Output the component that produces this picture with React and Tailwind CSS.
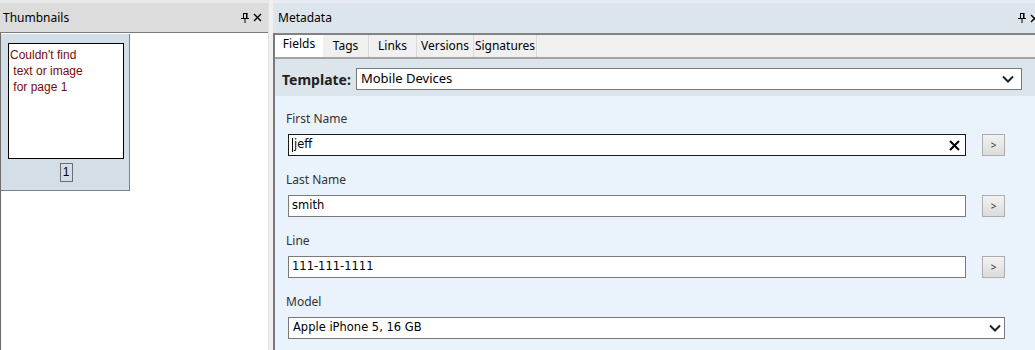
import React from 'react';

const ui = { fontFamily: '"Noto Sans", "Open Sans", sans-serif' };
const field = { fontFamily: '"DejaVu Sans", Verdana, sans-serif' };

function Pin() {
  return (
    <svg width="8" height="10" viewBox="0 0 8 10">
      <path d="M2 0.5h4.5 M2.5 0.5v5 M5.5 0.5v5 M0 5.5h8 M4 5.5v4.5" stroke="#000" strokeWidth="1" fill="none" />
      <rect x="5" y="0.5" width="1.5" height="5" fill="#000" />
    </svg>
  );
}

function Close() {
  return (
    <svg width="9" height="9" viewBox="0 0 9 9">
      <path d="M1 1L8 8M8 1L1 8" stroke="#000" strokeWidth="1.4" />
    </svg>
  );
}

function Chevron() {
  return (
    <svg width="12" height="8" viewBox="0 0 12 8">
      <path d="M1 1.5L6 6.5L11 1.5" stroke="#222" strokeWidth="2" fill="none" />
    </svg>
  );
}

function Field({ label, value, focused }) {
  return (
    <div className="mb-[16px]">
      <div className="pl-[11px] h-[16px] text-[12px] leading-[16px] text-[#333] mb-[7px]" style={ui}>{label}</div>
      <div className="flex items-center pl-[13px]">
        <div className={`relative w-[678px] h-[22px] bg-white border flex items-center pl-[3px] text-[11.5px] text-black ${focused ? 'border-[#1a1a1a]' : 'border-[#7a7a7a]'}`} style={field}>
          {focused && <span className="w-px h-[14px] bg-black mr-[1px]" />}
          {value}
          {focused && (
            <span className="absolute right-[5px] top-[5px]">
              <svg width="11" height="11" viewBox="0 0 11 11">
                <path d="M1 1L10 10M10 1L1 10" stroke="#000" strokeWidth="2" />
              </svg>
            </span>
          )}
        </div>
        <button className="ml-[16px] w-[23px] h-[22px] border border-[#adadad] bg-gradient-to-b from-[#f2f2f2] to-[#dcdcdc] text-[10px] text-[#333] leading-none flex items-center justify-center" style={ui}>
          &gt;
        </button>
      </div>
    </div>
  );
}

export default function App() {
  const tabs = [
    { name: 'Fields', w: 'w-[48px]' },
    { name: 'Tags', w: 'w-[46px]' },
    { name: 'Links', w: 'w-[48px]' },
    { name: 'Versions', w: 'w-[57px]' },
    { name: 'Signatures', w: 'w-[63px]' },
  ];

  return (
    <div className="w-[1035px] h-[350px] flex overflow-hidden bg-[#f0f0f0]" style={ui}>
      {/* Thumbnails panel */}
      <div className="w-[268px] shrink-0 flex flex-col">
        <div className="h-[33px] bg-[#dcdcdc] border-t-[3px] border-[#e9e9e9] border-b border-b-[#7a7a7a] flex items-center justify-between pl-[3px] pr-[6px]">
          <span className="text-[12px] text-black leading-none">Thumbnails</span>
          <div className="flex items-center gap-[4px]">
            <Pin />
            <Close />
          </div>
        </div>
        <div className="flex-1 bg-white border-l border-[#6d6d6d] pt-px">
          <div className="w-[129px] h-[157px] bg-[#d3dee6] border-r border-b border-[#7f7f7f] pt-[9px] pl-[7px]">
            <div className="w-[116px] h-[116px] bg-white border border-black pl-[1px] pt-[3px] text-[12px] leading-[16px] text-[#7a0a0a]" style={{ fontFamily: '"Liberation Sans", Arial, sans-serif' }}>
              <div>Couldn't find</div>
              <div>&nbsp;text or image</div>
              <div>&nbsp;for page 1</div>
            </div>
            <div className="flex justify-center w-[116px] mt-[4px]">
              <div className="w-[13px] h-[19px] border border-[#6d6d6d] text-[12px] leading-[17px] text-center text-black" style={{ fontFamily: '"Liberation Sans", Arial, sans-serif' }}>1</div>
            </div>
          </div>
        </div>
      </div>

      {/* splitter */}
      <div className="w-[5px] shrink-0 flex">
        <div className="w-px bg-[#e2e2e2]" />
      </div>

      {/* Metadata panel */}
      <div className="w-[772px] shrink-0 flex flex-col">
        <div className="h-[33px] bg-[#dde5ec] border-t-[3px] border-[#e6ecf1] flex items-center justify-between pl-[5px] pr-[6px]">
          <span className="text-[12px] text-black leading-none">Metadata</span>
          <div className="flex items-center gap-[4px]">
            <Pin />
            <Close />
          </div>
        </div>
        <div className="flex-1 flex flex-col border-l-2 border-[#7a7a7a]">
          {/* tab strip */}
          <div className="h-[26px] border-t-2 border-[#828282] border-b-2 border-b-[#a3a3a3] bg-[#f0f0f0] flex items-end">
            {tabs.map((t, i) => (
              <div
                key={t.name}
                className={`${t.w} h-[22px] text-[12px] flex justify-center ${i === 0 ? 'bg-white items-start pt-[1px]' : 'items-start pt-[3px] border-r border-[#dadada]'}`}
              >
                <span className="leading-[16px] text-black">{t.name}</span>
              </div>
            ))}
          </div>

          {/* template row */}
          <div className="h-[37px] bg-[#dde5ec] flex items-center pl-[7px] pt-[3px]">
            <span className="text-[14px] font-bold text-[#222] mr-[5px]">Template:</span>
            <div className="w-[666px] h-[22px] bg-white border border-[#7a7a7a] flex items-center justify-between pl-[4px] pr-[7px]">
              <span className="text-[13px] text-black">Mobile Devices</span>
              <Chevron />
            </div>
          </div>

          {/* fields */}
          <div className="flex-1 bg-[#eaf2fb] pt-[15px]">
            <Field label="First Name" value="jeff" focused />
            <Field label="Last Name" value="smith" />
            <Field label="Line" value="111-111-1111" />
            <div>
              <div className="pl-[11px] h-[16px] text-[12px] leading-[16px] text-[#333] mb-[7px]">Model</div>
              <div className="pl-[13px]">
                <div className="w-[717px] h-[22px] bg-white border border-[#7a7a7a] flex items-center justify-between pl-[4px] pr-[3px] text-[11.5px] text-black" style={field}>
                  <span>Apple iPhone 5, 16 GB</span>
                  <Chevron />
                </div>
              </div>
            </div>
          </div>
        </div>
      </div>
    </div>
  );
}
